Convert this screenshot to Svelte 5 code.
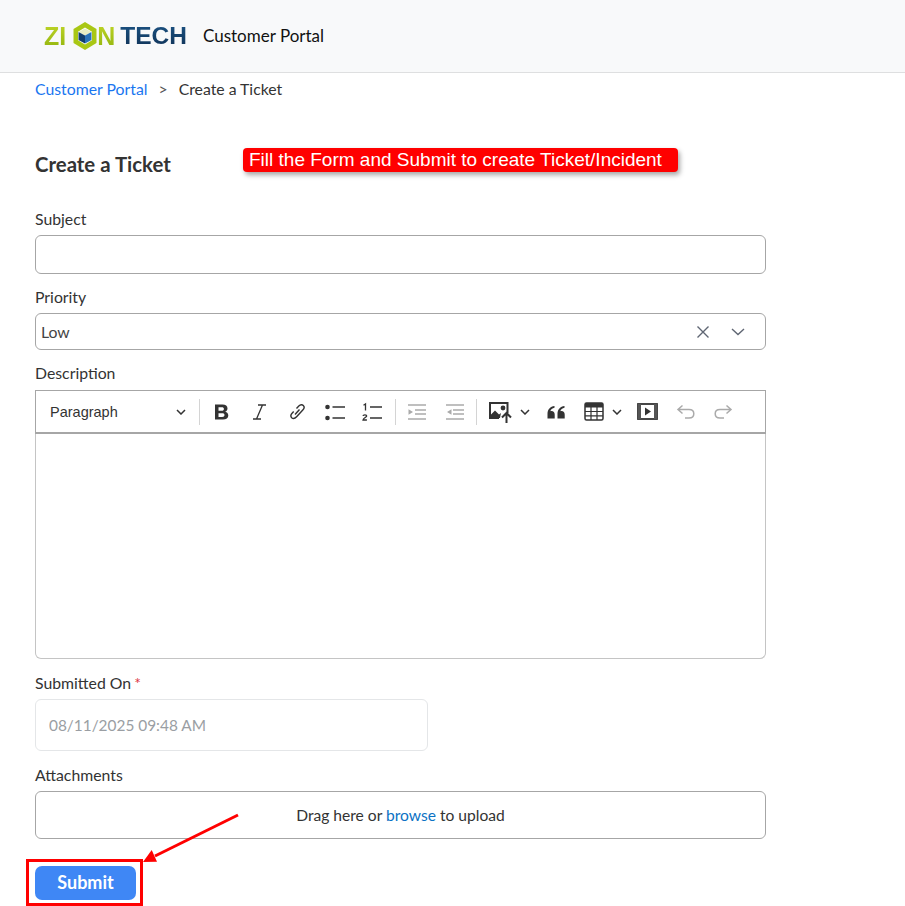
<script>
  const tools = ['bold', 'italic', 'link', 'ul', 'ol'];
</script>

<div class="page">
  <header class="topbar">
    <div class="logo">
      <span class="zi">ZI</span>
      <svg class="hex" viewBox="0 0 24 28" width="24" height="28">
        <path d="M12 0 23.500 7v14L12 28 .5 21V7z" fill="#a9c714" />
        <path d="M12 5.500 19 9.700v8.600L12 22.500 5 18.300V9.700z" fill="#fff" />
        <path d="M12 6.500 18.500 10 12 13.500 5.500 10z" fill="#e8eec4" />
        <path d="M5.500 10 12 13.500v8L5.500 18z" fill="#123f6d" />
        <path d="M18.500 10 12 13.500v8l6.500-3.500z" fill="#2a73b8" />
      </svg>
      <span class="n">N</span>
      <span class="tech">TECH</span>
    </div>
    <span class="portal">Customer Portal</span>
  </header>

  <nav class="crumbs">
    <a href="#top">Customer Portal</a>
    <span class="sep">&gt;</span>
    <span>Create a Ticket</span>
  </nav>

  <main class="form">
    <h1>Create a Ticket</h1>

    <label class="lbl first" for="subject">Subject</label>
    <input id="subject" class="text" type="text" />

    <label class="lbl" for="priority">Priority</label>
    <div id="priority" class="select">
      <span>Low</span>
      <svg class="x" width="14" height="14" viewBox="0 0 14 14"><path d="M1.500 1.500l11 11M12.500 1.500l-11 11" stroke="#5f6673" stroke-width="1.400" fill="none" /></svg>
      <svg class="caret" width="14" height="8" viewBox="0 0 14 8"><path d="M1 1l6 5.500L13 1" stroke="#5f6673" stroke-width="1.400" fill="none" /></svg>
    </div>

    <div class="lbl desc">Description</div>
    <div class="editor">
      <div class="toolbar">
        <div class="para">
          <span>Paragraph</span>
          <svg width="10" height="6" viewBox="0 0 10 6"><path d="M1 1l4 4 4-4" stroke="#333" stroke-width="1.500" fill="none" /></svg>
        </div>
        <i class="div"></i>
        <div class="group basics">
          {#each tools as t}
            <span class="tool">
              {#if t === 'bold'}
                <svg width="20" height="20" viewBox="0 0 20 20"><path d="M3 2.500h7.500c3.200 0 5 1.500 5 4 0 1.600-.9 2.800-2.300 3.300 1.900.4 3.100 1.800 3.100 3.800 0 2.800-2 3.900-5.300 3.900H3zM6.500 5.200v3.500h3.300c1.400 0 2.100-.6 2.100-1.750s-.7-1.750-2.100-1.750zM6.500 11.200v3.800h3.700c1.500 0 2.300-.6 2.300-1.900s-.8-1.900-2.300-1.900z" fill="#333" fill-rule="evenodd" /></svg>
              {:else if t === 'italic'}
                <svg width="20" height="20" viewBox="0 0 20 20"><path d="M8 3h8M3 17h8M12.500 3 6.500 17" stroke="#333" stroke-width="1.300" fill="none" /></svg>
              {:else if t === 'link'}
                <svg width="20" height="20" viewBox="0 0 20 20"><path d="M9.500 6.500 11.800 4c1.700-1.700 3.500-1.600 4.500-.6 1.100 1.100 1.100 2.900-.5 4.600l-6.200 6.800c-1.700 1.800-3.700 2-4.900.9-1.100-1.100-1-3 .6-4.700l1.400-1.500" stroke="#333" stroke-width="1.400" fill="none" /><path d="M8 12.500l4.500-5" stroke="#333" stroke-width="1.400" fill="none" /></svg>
              {:else if t === 'ul'}
                <svg width="20" height="20" viewBox="0 0 20 20"><circle cx="2.500" cy="5" r="2.300" fill="#333" /><circle cx="2.500" cy="16" r="2.300" fill="#333" /><path d="M7.500 5H20M7.500 16H20" stroke="#333" stroke-width="1.700" /></svg>
              {:else}
                <svg width="20" height="20" viewBox="0 0 20 20"><path d="M1.500 3.200 3.500 2v6.500" stroke="#333" stroke-width="1.300" fill="none" /><path d="M1 14c.3-1.600 3.700-1.500 3.700 0 0 1.300-3.400 1.900-3.700 4h3.900" stroke="#333" stroke-width="1.300" fill="none" /><path d="M8 5h12M8 16h12" stroke="#333" stroke-width="1.700" /></svg>
              {/if}
            </span>
          {/each}
        </div>
        <i class="div"></i>
        <div class="group">
          <span class="tool">
            <svg width="20" height="20" viewBox="0 0 20 20"><path d="M1 3h18M8 8h11M8 12h11M1 17h18" stroke="#aaa" stroke-width="1.300" /><path d="M1.500 7.300v5.400L6 10z" fill="#aaa" /></svg>
          </span>
          <span class="tool">
            <svg width="20" height="20" viewBox="0 0 20 20"><path d="M1 3h18M8 8h11M8 12h11M1 17h18" stroke="#aaa" stroke-width="1.300" /><path d="M6.500 7.300v5.400L2 10z" fill="#aaa" /></svg>
          </span>
        </div>
        <i class="div"></i>
        <div class="group">
          <span class="tool split">
            <svg width="24" height="22" viewBox="0 0 24 22"><path d="M1 1h19.500v11h-2V3H3v13h8v2H1z" fill="#333" /><path d="M2 17v-2.500l5-5 4 4 2-1.500-1 5z" fill="#333" /><circle cx="15" cy="7" r="2.400" fill="#333" /><path d="M18.500 22v-9.500M14 16.500l4.500-4.500 4.500 4.500" stroke="#333" stroke-width="2" fill="none" /></svg>
            <svg width="10" height="6" viewBox="0 0 10 6"><path d="M1 1l4 4 4-4" stroke="#333" stroke-width="1.500" fill="none" /></svg>
          </span>
          <span class="tool quote">
            <svg width="18" height="14" viewBox="0 0 18 14"><path d="M7.500 1v1.800C5.500 3.200 3.500 4.500 3.400 6.300c.3-.1.700-.2 1.100-.2 2 0 3.200 1.400 3.200 3.500v3.900H.5V8.800C.5 4.500 3.300 1.500 7.500 1zM17.500 1v1.800c-2 .4-4 1.700-4.100 3.500.3-.1.700-.2 1.100-.2 2 0 3.200 1.400 3.200 3.500v3.900h-7.200V8.800C10.500 4.500 13.300 1.500 17.500 1z" fill="#333" /></svg>
          </span>
          <span class="tool split">
            <svg width="20" height="19" viewBox="0 0 20 19"><rect x="1" y="1" width="18" height="17" rx="1.500" fill="none" stroke="#333" stroke-width="1.500" /><path d="M1 1h18v4.500H1z" fill="#333" /><path d="M7 5v13M13 5v13M1 9.500h18M1 13.800h18" stroke="#333" stroke-width="1.200" /></svg>
            <svg width="10" height="6" viewBox="0 0 10 6"><path d="M1 1l4 4 4-4" stroke="#333" stroke-width="1.500" fill="none" /></svg>
          </span>
          <span class="tool media">
            <svg width="21" height="17" viewBox="0 0 21 17"><rect x="1" y="1" width="19" height="15" fill="none" stroke="#333" stroke-width="1.800" /><path d="M1 1h3v15H1zM17 1h3v15h-3z" fill="#555" /><path d="M8 4.500v8l6-4z" fill="#333" /></svg>
          </span>
          <span class="tool">
            <svg width="20" height="16" viewBox="0 0 20 16"><path d="M6.500 1.500 2 5.500l4.500 4M2 5.500h11c3 0 4.800 1.800 4.800 4.200s-1.800 4.300-4.800 4.300H9" stroke="#aaa" stroke-width="1.500" fill="none" /></svg>
          </span>
          <span class="tool">
            <svg width="20" height="16" viewBox="0 0 20 16"><path d="M13.500 1.500 18 5.500l-4.500 4M18 5.500H7c-3 0-4.800 1.800-4.800 4.200S4 14 7 14h4" stroke="#aaa" stroke-width="1.500" fill="none" /></svg>
          </span>
        </div>
      </div>
      <div class="body"></div>
    </div>

    <label class="lbl sub" for="submitted">Submitted On<em>*</em></label>
    <input id="submitted" class="date" type="text" value="08/11/2025 09:48 AM" disabled />

    <div class="lbl att">Attachments</div>
    <div class="drop">Drag here or <span class="browse">browse</span> to upload</div>

    <button class="submit" type="button">Submit</button>
  </main>

  <!-- annotations laid over the screenshot -->
  <div class="banner">Fill the Form and Submit to create Ticket/Incident</div>
  <div class="redbox"></div>
  <svg class="arrow" width="110" height="60" viewBox="0 0 110 60">
    <path d="M97 2 14 43" stroke="#f00" stroke-width="3" fill="none" />
    <path d="M2 49 10.700 37 16 48.700z" fill="#f00" />
  </svg>
</div>

<style>
  :global(body) {
    margin: 0;
    background: #fff;
  }

  .page {
    position: relative;
    width: 905px;
    height: 906px;
    overflow: hidden;
    font-family: Lato, "Liberation Sans", sans-serif;
    font-size: 15.8px;
    color: #333;
  }

  .topbar {
    display: flex;
    align-items: center;
    box-sizing: border-box;
    height: 73px;
    padding-left: 44px;
    background: #f8f9fa;
    border-bottom: 1px solid #dedfe0;
  }

  .logo {
    display: flex;
    align-items: center;
    width: 159px;
    height: 30px;
    font-family: "Liberation Sans", Arial, sans-serif;
    font-size: 25px;
    font-weight: 700;
    line-height: 30px;
  }

  .zi, .n {
    background: linear-gradient(#c3d82a, #8fb20c);
    -webkit-background-clip: text;
    background-clip: text;
    color: transparent;
  }

  .hex {
    flex: none;
    margin-left: 7px;
  }

  .tech {
    margin-left: 5px;
    font-size: 24.5px;
    background: linear-gradient(#1c5687, #0f2f52);
    -webkit-background-clip: text;
    background-clip: text;
    color: transparent;
  }

  .portal {
    margin-bottom: 2px;
    font-size: 17px;
    color: #111;
  }

  .crumbs {
    display: flex;
    gap: 11px;
    padding: 7px 0 0 35px;
    height: 18px;
    line-height: 18px;
  }

  .crumbs a {
    color: #1a76f0;
    text-decoration: none;
  }

  .crumbs .sep {
    color: #555;
  }

  .form {
    display: flex;
    flex-direction: column;
    width: 731px;
    margin-left: 35px;
  }

  h1 {
    margin: 53px 0 0;
    font-size: 20.4px;
    font-weight: 700;
    line-height: 26px;
    color: #333;
  }

  .lbl {
    display: block;
    line-height: 18px;
    margin-top: 14px;
    margin-bottom: 7px;
    color: #333;
  }

  .lbl.first {
    margin-top: 33px;
  }

  .text {
    box-sizing: border-box;
    height: 39px;
    width: 100%;
    border: 1px solid #a6a6a6;
    border-radius: 6px;
    background: #fff;
  }

  .select {
    display: flex;
    align-items: center;
    box-sizing: border-box;
    height: 37px;
    padding: 0 20px 0 5px;
    border: 1px solid #a6a6a6;
    border-radius: 6px;
    color: #444;
  }

  .select span {
    flex: 1;
  }

  .select .x {
    margin-right: 21px;
  }

  .desc {
    margin-top: 14px;
    margin-bottom: 8px;
  }

  .editor {
    display: flex;
    flex-direction: column;
    height: 269px;
  }

  .toolbar {
    display: flex;
    align-items: center;
    box-sizing: border-box;
    height: 44px;
    border: 1px solid #a6a6a6;
    border-bottom-width: 2px;
    padding-left: 14px;
  }

  .para {
    display: flex;
    align-items: center;
    justify-content: space-between;
    width: 136px;
    font-family: "Liberation Sans", Arial, sans-serif;
    font-size: 14.5px;
    color: #333;
  }

  .div {
    width: 1px;
    height: 26px;
    margin: 0 11px;
    background: #d4d4d4;
  }

  .para + .div {
    margin: 0 12px 0 13px;
  }

  .group {
    display: flex;
    align-items: center;
    gap: 17.5px;
  }

  .basics {
    margin-right: 2px;
  }

  .tool {
    display: flex;
    align-items: center;
    gap: 8px;
  }

  .tool svg {
    display: block;
  }

  .quote {
    margin-right: 1px;
  }

  .media {
    margin-left: -2px;
  }

  .body {
    flex: 1;
    border: 1px solid #c4c4c4;
    border-top: 0;
    border-radius: 0 0 6px 6px;
  }

  .sub {
    margin-top: 15px;
    margin-bottom: 7px;
  }

  .sub em {
    margin-left: 3px;
    font-style: normal;
    color: #dc3545;
  }

  .date {
    box-sizing: border-box;
    width: 393px;
    height: 52px;
    padding: 0 13px;
    border: 1px solid #e4e6e8;
    border-radius: 6px;
    background: #fff;
    font: inherit;
    font-size: 15.4px;
    color: #9a9ea3;
  }

  .att {
    margin-top: 15px;
    margin-bottom: 7px;
  }

  .drop {
    box-sizing: border-box;
    height: 48px;
    line-height: 46px;
    text-align: center;
    border: 1px solid #a6a6a6;
    border-radius: 6px;
    font-size: 15.6px;
    color: #333;
  }

  .browse {
    color: #0b72c4;
  }

  .submit {
    width: 101px;
    height: 34px;
    margin-top: 27px;
    padding: 0 0 2px;
    border: 0;
    border-radius: 7px;
    background: #3f87f5;
    color: #fff;
    font: 700 18px Lato, sans-serif;
  }

  .banner {
    position: absolute;
    left: 243px;
    top: 148px;
    width: 435px;
    height: 24px;
    box-sizing: border-box;
    padding-left: 6px;
    border-radius: 4px;
    background: #f00;
    box-shadow: 2px 3px 5px rgba(0, 0, 0, 0.35);
    color: #fff;
    font: 19px/23px "Liberation Sans", Arial, sans-serif;
    white-space: nowrap;
  }

  .redbox {
    position: absolute;
    left: 26px;
    top: 859px;
    width: 117px;
    height: 47px;
    box-sizing: border-box;
    border: 3px solid #f00;
  }

  .arrow {
    position: absolute;
    left: 141px;
    top: 813px;
  }
</style>
